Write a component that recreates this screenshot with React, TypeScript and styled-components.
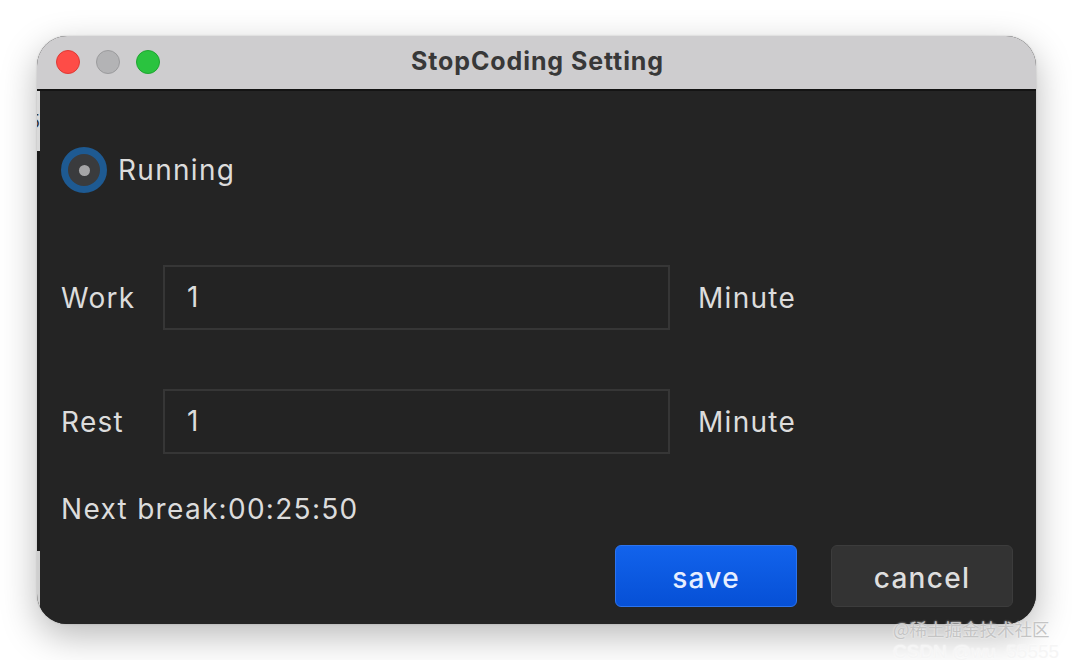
import React from 'react';
import styled, { createGlobalStyle } from 'styled-components';

const GlobalStyle = createGlobalStyle`
  body {
    margin: 0;
    background: #ffffff;
    font-family: Inter, "Open Sans", "Liberation Sans", sans-serif;
  }
`;

const App = () => {
  return (
    <Page>
      <GlobalStyle />
      <Window>
        <TitleBar>
          <Lights>
            <Light color="#fe4c47" edge="#de3a35" />
            <Light color="#b3b3b5" edge="#9b9b9d" />
            <Light color="#2ac33f" edge="#1fa531" />
          </Lights>
          <Title>StopCoding Setting</Title>
        </TitleBar>
        <Body>
          <Sliver>
            <SliverPart tone="#d9d9d9" size={60}>5</SliverPart>
            <SliverPart tone="#1b1b1b" size={400} />
            <SliverPart tone="#cfcfcf" size={0} />
          </Sliver>
          <Content>
            <RadioRow>
              <Radio>
                <RadioDot />
              </Radio>
              <Label>Running</Label>
            </RadioRow>

            <FieldRow gap={72}>
              <FieldLabel>Work</FieldLabel>
              <Input>1</Input>
              <Unit>Minute</Unit>
            </FieldRow>

            <FieldRow gap={59}>
              <FieldLabel>Rest</FieldLabel>
              <Input>1</Input>
              <Unit>Minute</Unit>
            </FieldRow>

            <NextBreak>Next break:00:25:50</NextBreak>

            <Actions>
              <Button primary>save</Button>
              <Button>cancel</Button>
            </Actions>
          </Content>
        </Body>
      </Window>
      <Watermark>
        <span>@稀土掘金技术社区</span>
        <Faint>CSDN @wu_55555</Faint>
      </Watermark>
    </Page>
  );
};

export default App;

const Page = styled.div`
  position: relative;
  width: 1072px;
  height: 660px;
  padding: 36px 0 0 37px;
  box-sizing: border-box;
`;

const Window = styled.div`
  width: 999px;
  height: 588px;
  border-radius: 30px;
  overflow: hidden;
  display: flex;
  flex-direction: column;
  background: #242424;
  box-shadow: 0 12px 36px rgba(0, 0, 0, 0.28), 0 0 2px rgba(0, 0, 0, 0.2);
`;

const TitleBar = styled.div`
  position: relative;
  height: 53px;
  flex-shrink: 0;
  background: #cecdcf;
  border-bottom: 2px solid #141414;
  display: flex;
  align-items: center;
  justify-content: center;
`;

const Lights = styled.div`
  position: absolute;
  left: 19px;
  top: 14px;
  display: flex;
  gap: 16px;
`;

const Light = styled.div<{ color: string; edge: string }>`
  width: 24px;
  height: 24px;
  border-radius: 50%;
  box-sizing: border-box;
  background: ${(p) => p.color};
  border: 1px solid ${(p) => p.edge};
`;

const Title = styled.div`
  font-size: 25px;
  font-weight: 700;
  color: #383838;
  letter-spacing: 0.9px;
  margin-left: 2px;
  padding-bottom: 3px;
`;

const Body = styled.div`
  flex: 1;
  display: flex;
`;

const Sliver = styled.div`
  width: 3px;
  display: flex;
  flex-direction: column;
  overflow: hidden;
`;

const SliverPart = styled.div<{ tone: string; size: number }>`
  background: ${(p) => p.tone};
  flex: ${(p) => (p.size ? `0 0 ${p.size}px` : '1')};
  color: #333;
  font-size: 18px;
  line-height: 1;
  padding-top: 22px;
  box-sizing: border-box;
  text-indent: -8px;
`;

const Content = styled.div`
  flex: 1;
  background: #242424;
  padding: 56px 23px 17px 21px;
  display: flex;
  flex-direction: column;
  color: #dddddd;
  font-size: 28px;
  letter-spacing: 1.3px;
`;

const RadioRow = styled.div`
  display: flex;
  align-items: center;
  gap: 11px;
  height: 46px;
`;

const Radio = styled.div`
  width: 46px;
  height: 46px;
  border-radius: 50%;
  box-sizing: border-box;
  border: 7px solid #1e5a92;
  background: #3a3b3d;
  display: flex;
  align-items: center;
  justify-content: center;
`;

const RadioDot = styled.div`
  width: 11px;
  height: 11px;
  border-radius: 50%;
  background: #a5a5a7;
`;

const Label = styled.span`
  color: #dcdcdc;
`;

const FieldRow = styled.div<{ gap: number }>`
  margin-top: ${(p) => p.gap}px;
  display: flex;
  align-items: center;
  height: 65px;
`;

const FieldLabel = styled.span`
  width: 102px;
  color: #dcdcdc;
`;

const Input = styled.div`
  width: 507px;
  height: 65px;
  box-sizing: border-box;
  border: 2px solid #363636;
  background: #232323;
  padding-left: 22px;
  padding-bottom: 2px;
  display: flex;
  align-items: center;
  color: #dcdcdc;
`;

const Unit = styled.span`
  margin-left: 28px;
  color: #dcdcdc;
`;

const NextBreak = styled.div`
  margin-top: 38px;
  height: 34px;
  line-height: 34px;
  color: #dcdcdc;
`;

const Actions = styled.div`
  margin-top: 19px;
  display: flex;
  justify-content: flex-end;
  gap: 34px;
`;

const Button = styled.div<{ primary?: boolean }>`
  width: 182px;
  height: 62px;
  box-sizing: border-box;
  border-radius: 6px;
  display: flex;
  align-items: center;
  justify-content: center;
  padding-top: 4px;
  font-weight: 500;
  color: ${(p) => (p.primary ? '#e6eeff' : '#dedede')};
  background: ${(p) =>
    p.primary ? 'linear-gradient(#1263ec, #0650d6)' : '#333333'};
  border: 1px solid ${(p) => (p.primary ? '#2c74ef' : '#3c3c3c')};
`;

const Watermark = styled.div`
  position: absolute;
  left: 893px;
  top: 617px;
  display: flex;
  flex-direction: column;
  font-family: "Noto Sans CJK SC", "Liberation Sans", sans-serif;
  font-size: 17.5px;
  line-height: 24px;
  color: #c4c4c4;
  text-shadow: 0 0 2px #ffffff;
`;

const Faint = styled.span`
  color: #f5f5f5;
  font-family: "Liberation Sans", sans-serif;
  font-size: 19px;
  line-height: 20px;
  margin-top: 1px;
`;
